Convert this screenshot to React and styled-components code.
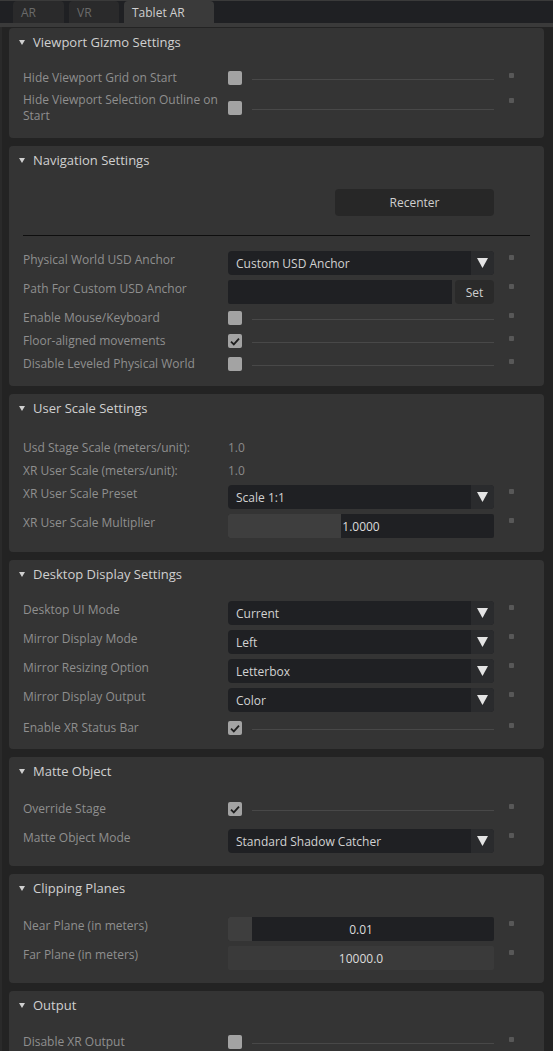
import React from "react";
import styled, { createGlobalStyle } from "styled-components";

const GlobalStyle = createGlobalStyle`
  body {
    margin: 0;
    background: #232323;
    font-family: "Open Sans", "Noto Sans", sans-serif;
    overflow: hidden;
  }
`;

const Window = styled.div`
  width: 553px;
  height: 1051px;
  background: #232323;
  overflow: hidden;
  display: flex;
  flex-direction: column;
`;

const TabBar = styled.div`
  flex: none;
  display: flex;
  align-items: flex-end;
  gap: 5px;
  height: 23px;
  padding-left: 13px;
  background: #1f2023;
  border-top: 1px solid #3a3a3a;
  box-sizing: border-box;
`;

const Tab = styled.div`
  height: 22px;
  width: ${(p) => p.w}px;
  box-sizing: border-box;
  padding-left: 8px;
  display: flex;
  align-items: center;
  font-size: 12px;
  border-radius: 4px 4px 0 0;
  background: ${(p) => (p.active ? "#3a3a3a" : "#2a2a2b")};
  color: ${(p) => (p.active ? "#cfcfcf" : "#6a6a6a")};
`;

const Strip = styled.div`
  flex: none;
  height: 4px;
  background: #3a3a3a;
`;

const Body = styled.div`
  flex: none;
  display: flex;
  flex-direction: column;
  gap: 8px;
  padding: 1px 9px 0 9px;
  border-left: 2px solid #2a2a2a;
`;

const Panel = styled.div`
  flex: none;
  background: #343434;
  border-radius: 4px;
  width: 535px;
  margin-left: -2px;
`;

const Header = styled.div`
  height: 28px;
  display: flex;
  align-items: center;
  padding-left: 10px;
  gap: 8px;
  color: #d0d0d0;
  font-size: 13px;
`;

const Tri = styled.span`
  width: 0;
  height: 0;
  border-left: 3.5px solid transparent;
  border-right: 3.5px solid transparent;
  border-top: 5px solid #cfcfcf;
`;

const Content = styled.div`
  display: flex;
  flex-direction: column;
  gap: 5px;
  padding: ${(p) => p.top || 13}px 14px ${(p) => p.bottom || 14}px 14px;
`;

const Row = styled.div`
  display: flex;
  align-items: ${(p) => (p.center ? "center" : "flex-start")};
  margin-top: ${(p) => p.mt || 0}px;
`;

const Label = styled.div`
  width: 205px;
  flex: none;
  font-size: 12px;
  line-height: ${(p) => (p.multi ? "16px" : "18px")};
  color: #8f8f8f;
  box-sizing: border-box;
  padding-right: 4px;
`;

const Widget = styled.div`
  width: 266px;
  flex: none;
  display: flex;
  align-items: center;
`;

const Dot = styled.span`
  width: 5px;
  height: 5px;
  border-radius: 1px;
  background: #585858;
  margin-left: 15px;
  margin-top: ${(p) => p.mt ?? 4}px;
  align-self: flex-start;
`;

const Box = styled.span`
  width: 14px;
  height: 14px;
  border-radius: 2px;
  background: #a3a3a3;
  flex: none;
  display: flex;
  align-items: center;
  justify-content: center;
`;

const Line = styled.span`
  flex: 1;
  height: 1px;
  background: #484848;
  margin-left: 10px;
  margin-top: 2px;
`;

const Combo = styled.div`
  width: 100%;
  height: 24px;
  border-radius: 4px;
  background: #1f2023;
  display: flex;
  overflow: hidden;
  font-size: 12px;
  color: #d2d2d2;
`;

const ComboText = styled.div`
  flex: 1;
  padding-left: 8px;
  display: flex;
  align-items: center;
`;

const ComboArrow = styled.div`
  width: 23px;
  background: #2a2b2d;
  display: flex;
  align-items: center;
  justify-content: center;
`;

const TextField = styled.div`
  flex: 1;
  height: 24px;
  background: #1f2023;
  border-radius: 2px 0 0 2px;
`;

const SmallButton = styled.div`
  width: 39px;
  height: 24px;
  margin-left: 3px;
  border-radius: 4px;
  background: #2a2a2a;
  color: #cfcfcf;
  font-size: 12px;
  display: flex;
  align-items: center;
  justify-content: center;
`;

const Slider = styled.div`
  position: relative;
  width: 100%;
  height: 24px;
  background: ${(p) => (p.flat ? "#3a3a3a" : "#1f2023")};
  border-radius: 2px;
  overflow: hidden;
  display: flex;
  align-items: center;
  justify-content: center;
  font-size: 12px;
  color: #dcdcdc;
`;

const Fill = styled.div`
  position: absolute;
  left: 0;
  top: 0;
  bottom: 0;
  background: #3e3e3e;
`;

const SliderValue = styled.span`
  position: relative;
`;

const Value = styled.div`
  font-size: 12px;
  line-height: 18px;
  color: #8a8a8a;
`;

const ButtonRow = styled.div`
  display: flex;
  justify-content: flex-end;
  padding-right: 36px;
`;

const BigButton = styled.div`
  width: 159px;
  height: 27px;
  border-radius: 4px;
  background: #272727;
  color: #cfcfcf;
  font-size: 12px;
  display: flex;
  align-items: center;
  justify-content: center;
`;

const Separator = styled.div`
  height: 1px;
  background: #0e0e0e;
  margin: 14px 0 10px 0;
`;

const Check = () => (
  <svg width="10" height="9" viewBox="0 0 10 9">
    <path d="M1 4.6 L3.8 7.4 L9 1.6" fill="none" stroke="#1e1e1e" strokeWidth="1.8" />
  </svg>
);

const Arrow = () => (
  <svg width="11" height="10" viewBox="0 0 11 10">
    <path d="M0 0 H11 L5.5 10 Z" fill="#e4e4e4" />
  </svg>
);

const Section = ({ title, top, bottom, children }) => (
  <Panel>
    <Header>
      <Tri />
      {title}
    </Header>
    <Content top={top} bottom={bottom}>
      {children}
    </Content>
  </Panel>
);

const CheckRow = ({ label, checked, multi, mt }) => (
  <Row center mt={mt}>
    <Label multi={multi}>{label}</Label>
    <Widget>
      <Box>{checked && <Check />}</Box>
      <Line />
    </Widget>
    <Dot mt={multi ? 6 : 4} />
  </Row>
);

const ComboRow = ({ label, value, mt }) => (
  <Row mt={mt}>
    <Label>{label}</Label>
    <Widget>
      <Combo>
        <ComboText>{value}</ComboText>
        <ComboArrow>
          <Arrow />
        </ComboArrow>
      </Combo>
    </Widget>
    <Dot />
  </Row>
);

const SliderRow = ({ label, value, fill, flat }) => (
  <Row>
    <Label>{label}</Label>
    <Widget>
      <Slider flat={flat}>
        {fill != null && <Fill style={{ width: `${fill}%` }} />}
        <SliderValue>{value}</SliderValue>
      </Slider>
    </Widget>
    <Dot />
  </Row>
);

const ValueRow = ({ label, value }) => (
  <Row>
    <Label>{label}</Label>
    <Value>{value}</Value>
  </Row>
);

export default function App() {
  return (
    <Window>
      <GlobalStyle />
      <TabBar>
        <Tab w={51}>AR</Tab>
        <Tab w={50}>VR</Tab>
        <Tab w={90} active>
          Tablet AR
        </Tab>
      </TabBar>
      <Strip />
      <Body>
        <Section title="Viewport Gizmo Settings">
          <CheckRow label="Hide Viewport Grid on Start" />
          <CheckRow label="Hide Viewport Selection Outline on Start" multi />
        </Section>

        <Section title="Navigation Settings" top={15} bottom={13}>
          <ButtonRow>
            <BigButton>Recenter</BigButton>
          </ButtonRow>
          <Separator />
          <ComboRow label="Physical World USD Anchor" value="Custom USD Anchor" />
          <Row>
            <Label>Path For Custom USD Anchor</Label>
            <Widget>
              <TextField />
              <SmallButton>Set</SmallButton>
            </Widget>
            <Dot />
          </Row>
          <CheckRow label="Enable Mouse/Keyboard" />
          <CheckRow label="Floor-aligned movements" checked />
          <CheckRow label="Disable Leveled Physical World" />
        </Section>

        <Section title="User Scale Settings" top={17}>
          <ValueRow label="Usd Stage Scale (meters/unit):" value="1.0" />
          <ValueRow label="XR User Scale (meters/unit):" value="1.0" />
          <ComboRow label="XR User Scale Preset" value="Scale 1:1" />
          <SliderRow label="XR User Scale Multiplier" value="1.0000" fill={42.5} />
        </Section>

        <Section title="Desktop Display Settings" bottom={12}>
          <ComboRow label="Desktop UI Mode" value="Current" />
          <ComboRow label="Mirror Display Mode" value="Left" />
          <ComboRow label="Mirror Resizing Option" value="Letterbox" />
          <ComboRow label="Mirror Display Output" value="Color" />
          <CheckRow label="Enable XR Status Bar" checked mt={2} />
        </Section>

        <Section title="Matte Object" top={15} bottom={13}>
          <CheckRow label="Override Stage" checked />
          <ComboRow label="Matte Object Mode" value="Standard Shadow Catcher" mt={6} />
        </Section>

        <Section title="Clipping Planes" top={15} bottom={13}>
          <SliderRow label="Near Plane (in meters)" value="0.01" fill={9} />
          <SliderRow label="Far Plane (in meters)" value="10000.0" flat />
        </Section>

        <Section title="Output" top={14}>
          <CheckRow label="Disable XR Output" />
        </Section>
      </Body>
    </Window>
  );
}
